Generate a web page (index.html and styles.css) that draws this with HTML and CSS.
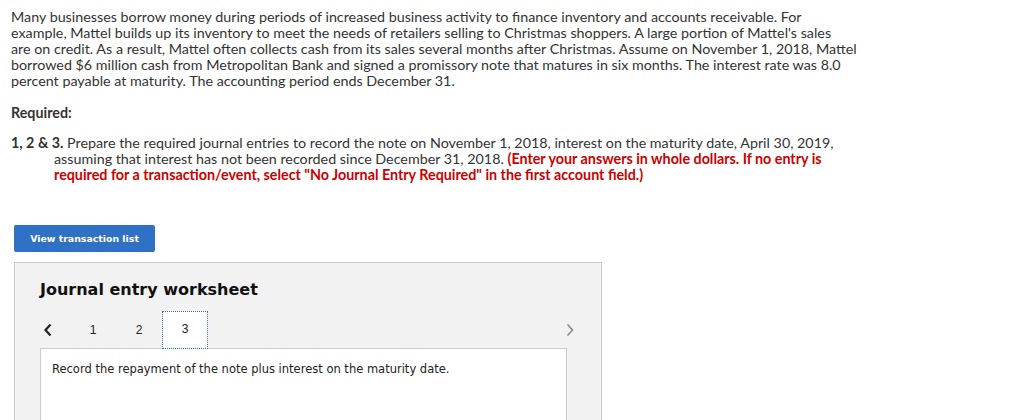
FILE: index.html
```html
<!DOCTYPE html>
<html>
<head>
<meta charset="utf-8">
<link rel="stylesheet" href="styles.css">
</head>
<body>
<div class="page">
  <p class="intro">Many businesses borrow money during periods of increased business activity to finance inventory and accounts receivable. For<br>example, Mattel builds up its inventory to meet the needs of retailers selling to Christmas shoppers. A large portion of Mattel's sales<br>are on credit. As a result, Mattel often collects cash from its sales several months after Christmas. Assume on November 1, 2018, Mattel<br>borrowed $6 million cash from Metropolitan Bank and signed a promissory note that matures in six months. The interest rate was 8.0<br>percent payable at maturity. The accounting period ends December 31.</p>
  <p class="required">Required:</p>
  <p class="question"><b>1, 2 &amp; 3.</b> Prepare the required journal entries to record the note on November 1, 2018, interest on the maturity date, April 30, 2019,<br>assuming that interest has not been recorded since December 31, 2018. <span class="red">(Enter your answers in whole dollars. If no entry is<br>required for a transaction/event, select "No Journal Entry Required" in the first account field.)</span></p>
  <button class="btn">View transaction list</button>
  <div class="worksheet">
    <h2 class="ws-title">Journal entry worksheet</h2>
    <div class="tabs">
      <span class="arrow prev"><svg width="10" height="14" viewBox="0 0 10 14"><path d="M7.5 1.5 L2.5 7 L7.5 12.5" fill="none" stroke="#222" stroke-width="2.2"/></svg></span>
      <span class="tab">1</span>
      <span class="tab">2</span>
      <span class="tab active">3</span>
      <span class="spacer"></span>
      <span class="arrow next"><svg width="10" height="14" viewBox="0 0 10 14"><path d="M2.5 1.5 L7.5 7 L2.5 12.5" fill="none" stroke="#888" stroke-width="1.6"/></svg></span>
    </div>
    <div class="panel">
      <p>Record the repayment of the note plus interest on the maturity date.</p>
    </div>
  </div>
</div>
</body>
</html>
```
FILE: styles.css
```css
html, body { margin: 0; padding: 0; background: #fff; }
body { overflow: hidden; height: 420px; }
.page {
  padding: 9px 11px 0 11px;
  font-family: Lato, "Liberation Sans", sans-serif;
  font-size: 14.3px;
  line-height: 16px;
  color: #333;
}
.intro { margin: 0; white-space: nowrap; }
.required { margin: 16px 0 0 0; font-weight: bold; }
.question { margin: 14px 0 0 0; white-space: nowrap; padding-left: 43px; text-indent: -43px; }
.red { color: #c00; font-weight: bold; }
.btn {
  display: block;
  margin: 42px 0 0 3px;
  width: 141px; height: 27px;
  border: none; border-radius: 2px;
  background: #2f72c5;
  color: #fff;
  font-family: "DejaVu Sans", Verdana, sans-serif;
  font-size: 9.4px;
  font-weight: bold;
}
.worksheet {
  margin: 10px 0 0 3px;
  width: 588px;
  height: 200px;
  background: #f2f2f2;
  border: 1px solid #ccc;
  box-sizing: border-box;
  padding: 17px 26px 0 25px;
  font-family: "DejaVu Sans", Verdana, sans-serif;
}
.ws-title { margin: 0; font-size: 16px; line-height: 20px; font-weight: bold; color: #111; }
.tabs { display: flex; align-items: center; margin-top: 11px; height: 38px; }
.arrow { display: flex; align-items: center; }
.prev { margin-left: 3px; width: 27px; }
.tab { width: 46px; text-align: center; font-family: "Liberation Sans", Arial, sans-serif; font-size: 12px; color: #222; line-height: 38px; }
.tab.active { background: #fff; border: 1.5px dotted #2f72c5; box-sizing: border-box; height: 38px; line-height: 34px; position: relative; z-index: 1; }
.spacer { flex: 1; }
.panel {
  background: #fff;
  border: 1px solid #ccc;
  width: 527px;
  box-sizing: border-box;
  height: 100px;
  margin-top: -1px;
  padding: 12px 11px;
}
.panel p { margin: 0; font-size: 11.5px; color: #222; line-height: 16px; }
```
